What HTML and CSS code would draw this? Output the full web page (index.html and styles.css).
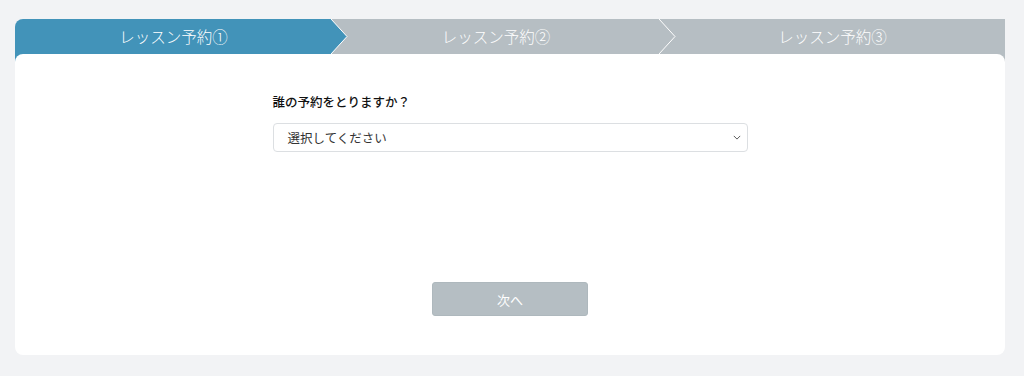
FILE: index.html
```html
<!DOCTYPE html>
<html lang="ja">
<head>
<meta charset="utf-8">
<link rel="stylesheet" href="styles.css">
</head>
<body>
<div class="page">
  <div class="steps">
    <div class="step step-active step-1">
      <span>レッスン予約①</span>
      <svg class="arrow" viewBox="0 0 17 35" width="17" height="35"><polygon points="0,0 16,17.5 0,35" fill="#4293b9"/><polyline points="0,0 16,17.5 0,35" fill="none" stroke="#ffffff" stroke-width="1"/></svg>
    </div>
    <div class="step step-2">
      <span>レッスン予約②</span>
      <svg class="arrow" viewBox="0 0 17 35" width="17" height="35"><polygon points="0,0 16,17.5 0,35" fill="#b6bec3"/><polyline points="0,0 16,17.5 0,35" fill="none" stroke="#ffffff" stroke-width="1"/></svg>
    </div>
    <div class="step step-3">
      <span>レッスン予約③</span>
    </div>
  </div>
  <div class="card">
    <form class="form">
      <label class="label">誰の予約をとりますか？</label>
      <div class="select">
        <span>選択してください</span>
        <svg class="caret" viewBox="0 0 10 6" width="8" height="5"><polyline points="1,1 5,5 9,1" fill="none" stroke="#555" stroke-width="1.2"/></svg>
      </div>
      <div class="actions">
        <button type="button" class="btn">次へ</button>
      </div>
    </form>
  </div>
</div>
</body>
</html>
```
FILE: styles.css
```css
html, body {
  margin: 0;
  padding: 0;
  background: #f2f3f5;
  font-family: "Noto Sans CJK JP", "Noto Sans", sans-serif;
}
.page {
  padding: 19px 19px 0 15px;
}
.steps {
  display: flex;
  height: 43px;
  border-radius: 8px 0 0 0;
}
.step {
  position: relative;
  display: flex;
  justify-content: center;
  padding-top: 6px;
  box-sizing: border-box;
  height: 43px;
  color: #fff;
  font-size: 15.5px;
  font-weight: 300;
  line-height: 22px;
  background: #b6bec3;
}
.step-active {
  background: #4293b9;
  border-radius: 8px 0 0 0;
}
.step-1 { width: 317px; }
.step-2 { width: 328px; }
.step-3 { flex: 1; }
.step span { position: relative; z-index: 2; }
.arrow {
  position: absolute;
  top: 0;
  right: -16px;
  z-index: 1;
}
.card {
  position: relative;
  z-index: 3;
  margin-top: -8px;
  background: #fff;
  border-radius: 8px;
  height: 301px;
  padding-top: 39px;
  box-sizing: border-box;
}
.form {
  width: 475px;
  margin: 0 auto;
}
.label {
  display: block;
  font-size: 12.5px;
  font-weight: 500;
  color: #111;
  line-height: 18px;
}
.select {
  margin-top: 12px;
  height: 29px;
  border: 1px solid #dcdfe2;
  border-radius: 4px;
  box-sizing: border-box;
  display: flex;
  align-items: center;
  justify-content: space-between;
  padding: 0 6px 0 14px;
  font-size: 12.5px;
  color: #333;
}
.actions {
  display: flex;
  justify-content: center;
  margin-top: 130px;
}
.btn {
  width: 156px;
  height: 34px;
  border: 1px solid #aeb8bd;
  border-radius: 3px;
  background: #b5bec3;
  color: #fff;
  font-family: inherit;
  font-size: 13px;
  padding: 0;
}
```
